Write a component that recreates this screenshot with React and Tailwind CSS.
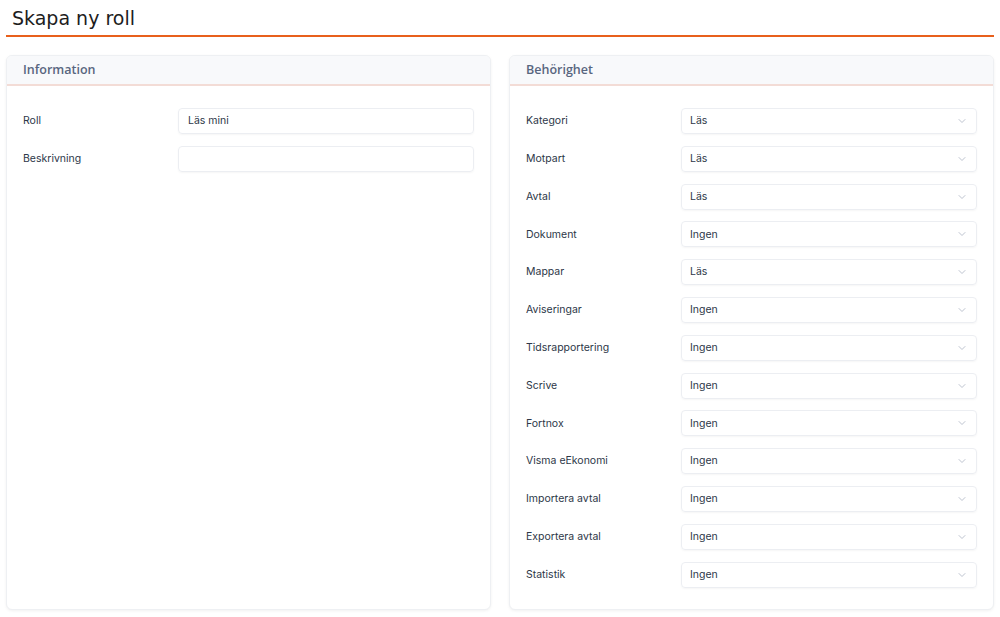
import { ChevronDown } from 'lucide-react'

const BEHORIGHETER = [
  ['Kategori', 'Läs'],
  ['Motpart', 'Läs'],
  ['Avtal', 'Läs'],
  ['Dokument', 'Ingen'],
  ['Mappar', 'Läs'],
  ['Aviseringar', 'Ingen'],
  ['Tidsrapportering', 'Ingen'],
  ['Scrive', 'Ingen'],
  ['Fortnox', 'Ingen'],
  ['Visma eEkonomi', 'Ingen'],
  ['Importera avtal', 'Ingen'],
  ['Exportera avtal', 'Ingen'],
  ['Statistik', 'Ingen'],
]

export default function App() {
  return (
    <div className="w-[1000px] h-[617px] bg-white px-[6px] font-['Inter',sans-serif] overflow-hidden">
      <div className="h-[37px] border-b-2 border-[#e8601c] flex items-center pl-[6px]">
        <h1 className="font-['DejaVu_Sans',sans-serif] text-[19px] text-[#1d1d1d] leading-none mt-[1px]">Skapa ny roll</h1>
      </div>

      <div className="mt-[18px] flex gap-[18px]">
        <Kort titel="Information">
          <Rad label="Roll">
            <Falt varde="Läs mini" />
          </Rad>
          <Rad label="Beskrivning">
            <Falt varde="" />
          </Rad>
        </Kort>

        <Kort titel="Behörighet">
          {BEHORIGHETER.map(([namn, val]) => (
            <Rad key={namn} label={namn}>
              <Val varde={val} />
            </Rad>
          ))}
        </Kort>
      </div>
    </div>
  )
}

function Kort({ titel, children }) {
  return (
    <div className="flex-1 h-[555px] bg-white rounded-md border border-[#eef0f3] shadow-[0_1px_3px_rgba(0,0,0,0.06)] overflow-hidden">
      <div className="h-[30px] bg-[#f8f9fb] border-b-2 border-[#f3dcd6] flex items-center px-[16px]">
        <span className="font-['Open_Sans',sans-serif] font-semibold text-[12.5px] text-[#58667f]">{titel}</span>
      </div>
      <div className="px-[16px] pt-[22px] flex flex-col gap-[11.8px]">{children}</div>
    </div>
  )
}

function Rad({ label, children }) {
  return (
    <div className="flex items-center">
      <div className="w-[155px] shrink-0 text-[10.5px] text-[#2d3748]">{label}</div>
      <div className="flex-1">{children}</div>
    </div>
  )
}

function Falt({ varde }) {
  return (
    <div className="h-[26px] rounded-[4px] border border-[#eceef2] shadow-[0_1px_2px_rgba(0,0,0,0.04)] flex items-center px-[9px] text-[10.5px] text-[#2d3748]">
      {varde}
    </div>
  )
}

function Val({ varde }) {
  return (
    <div className="h-[26px] rounded-[4px] border border-[#eceef2] shadow-[0_1px_2px_rgba(0,0,0,0.04)] flex items-center justify-between pl-[8px] pr-[8px] text-[10.5px] text-[#2d3748]">
      <span>{varde}</span>
      <ChevronDown size={12} strokeWidth={1.5} className="text-[#a7afbf]" />
    </div>
  )
}
